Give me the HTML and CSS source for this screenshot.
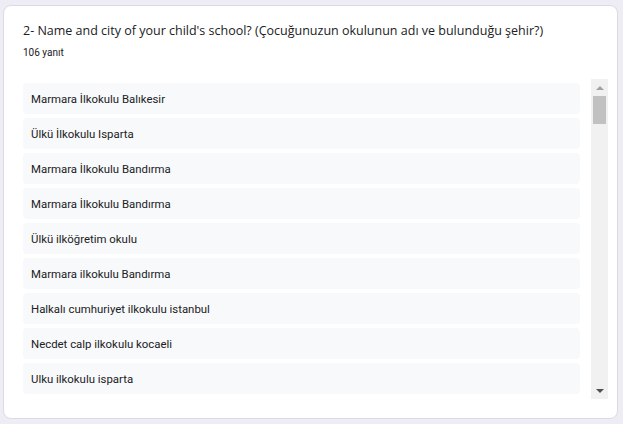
FILE: index.html
```html
<!DOCTYPE html>
<html lang="tr">
<head>
<meta charset="utf-8">
<title>Yanıtlar</title>
<link rel="stylesheet" href="styles.css">
</head>
<body>
<div class="card">
  <div class="title">2- Name and city of your child's school? (Çocuğunuzun okulunun adı ve bulunduğu şehir?)</div>
  <div class="count">106 yanıt</div>
  <div class="scroller">
    <div class="list">
      <div class="item">Marmara İlkokulu Balıkesir</div>
      <div class="item">Ülkü İlkokulu Isparta</div>
      <div class="item">Marmara İlkokulu Bandırma</div>
      <div class="item">Marmara İlkokulu Bandırma</div>
      <div class="item">Ülkü ilköğretim okulu</div>
      <div class="item">Marmara ilkokulu Bandırma</div>
      <div class="item">Halkalı cumhuriyet ilkokulu istanbul</div>
      <div class="item">Necdet calp ilkokulu kocaeli</div>
      <div class="item">Ulku ilkokulu isparta</div>
    </div>
    <div class="scrollbar">
      <div class="arrow up"></div>
      <div class="track"><div class="thumb"></div></div>
      <div class="arrow down"></div>
    </div>
  </div>
</div>
</body>
</html>
```
FILE: styles.css
```css
html, body {
  margin: 0;
  padding: 0;
}
body {
  background: #eeecf4;
  padding: 5px 5px 5px 3px;
  font-family: Roboto, "Liberation Sans", sans-serif;
  color: #202124;
}
.card {
  box-sizing: border-box;
  width: 615px;
  height: 414px;
  background: #fff;
  border: 1px solid #dcdbe3;
  border-radius: 8px;
  padding: 14px 9px 0 19px;
}
.title {
  font-family: "Open Sans", "Noto Sans", sans-serif;
  font-size: 12.5px;
  line-height: 22px;
  color: #202124;
}
.count {
  margin-top: 4px;
  font-size: 10px;
  line-height: 14px;
  color: #202124;
}
.scroller {
  margin-top: 19px;
  height: 320px;
  display: flex;
}
.list {
  flex: 1;
  overflow: hidden;
  padding-top: 4px;
  padding-right: 11px;
}
.item {
  height: 31px;
  margin-bottom: 4px;
  background: #f8f9fa;
  border-radius: 4px;
  display: flex;
  align-items: center;
  padding-left: 8px;
  font-size: 11.4px;
  color: #202124;
}
.scrollbar {
  width: 17px;
  background: #f1f1f1;
  display: flex;
  flex-direction: column;
}
.arrow {
  height: 17px;
  display: flex;
  align-items: center;
  justify-content: center;
}
.arrow::before {
  content: "";
  width: 0;
  height: 0;
  border-left: 4px solid transparent;
  border-right: 4px solid transparent;
}
.arrow.up::before {
  border-bottom: 4px solid #a3a3a3;
}
.arrow.down::before {
  border-top: 4px solid #505050;
}
.track {
  flex: 1;
  padding: 0 2px;
}
.thumb {
  height: 28px;
  background: #c1c1c1;
}
```
